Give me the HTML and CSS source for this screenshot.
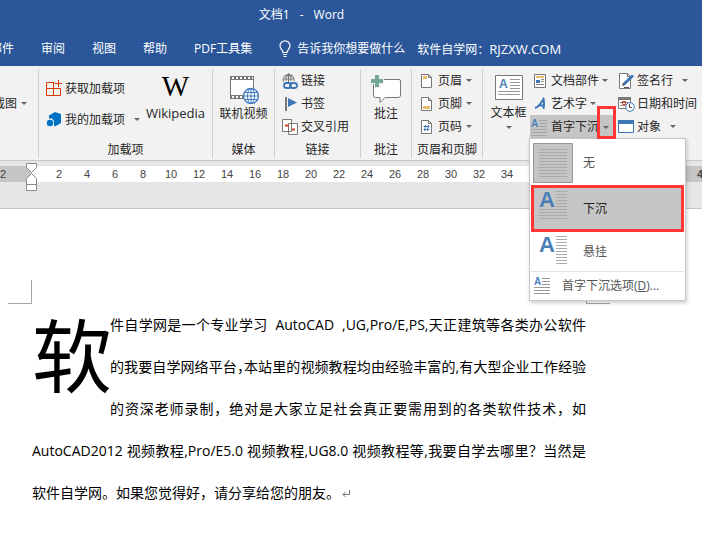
FILE: index.html
```html
<!DOCTYPE html>
<html lang="zh-CN">
<head>
<meta charset="utf-8">
<title>文档1 - Word</title>
<link rel="stylesheet" href="styles.css">
</head>
<body>
<header class="top">
  <div class="title"><span>文档1</span><span>-</span><span>Word</span></div>
  <nav class="tabs">
    <a href="#">邮件</a><a href="#">审阅</a><a href="#">视图</a><a href="#">帮助</a><a href="#">PDF工具集</a>
    <button class="tell" type="button">
      <svg width="12" height="18" viewBox="0 0 12 18" fill="none" stroke="#fff" stroke-width="1.2"><path d="M4 12.5C4 10 1 9 1 5.800A5 5 0 0 1 11 5.800C11 9 8 10 8 12.500ZM4 14.500H8M4.500 16.500H7.500"/></svg>
      <span>告诉我你想要做什么</span>
    </button>
    <span class="site">软件自学网：<span class="domain">RJZXW.COM</span></span>
  </nav>
</header>

<section class="ribbon">
  <div class="group shot">
    <button class="cmd" type="button"><span>屏幕截图</span><i class="caret"></i></button>
  </div>

  <div class="group">
    <div class="body addins">
      <div class="stack two">
        <button class="cmd" type="button">
          <svg width="17" height="17" viewBox="0 0 17 17" fill="none" stroke="#d83b01"><path d="M8.500 2.500H.5V15.500H14.500V8.500M.5 8.500H14.500M7.500 2.500V15.500M12.500 0V7M9 3.500H16"/></svg>
          <span>获取加载项</span>
        </button>
        <button class="cmd" type="button">
          <svg width="17" height="17" viewBox="0 0 17 17" fill="#0072c6"><path d="M3 4.500L9 1L15 3V12L9 15.500L8 14.500V10L6 7.500L3 7.500Z"/><circle cx="4" cy="12" r="3.200"/></svg>
          <span>我的加载项</span><i class="caret far"></i>
        </button>
      </div>
      <button class="big wiki" type="button"><span class="w" aria-hidden="true">W</span><span>Wikipedia</span></button>
    </div>
    <h2>加载项</h2>
  </div>

  <div class="group">
    <button class="body big" type="button">
      <svg width="30" height="30" viewBox="0 0 30 30" fill="none" stroke="#777"><path fill="#fff" d="M1.500 2.500H24.500V24.500H1.500Z"/><path stroke-width="4" d="M1 4H25M1 23H15"/><path stroke="#fff" stroke-width="2" stroke-dasharray="2 2" d="M3 4H24M3 23H14"/><circle cx="22" cy="22" r="7.500" fill="#fff" stroke="#3f7dbd" stroke-width="1.300"/><g stroke="#3f7dbd"><ellipse cx="22" cy="22" rx="3.500" ry="7.500"/><path d="M14.500 22H29.500M22 14.500V29.500M15.500 18.500H28.500M15.500 25.500H28.500"/></g></svg>
      <span>联机视频</span>
    </button>
    <h2>媒体</h2>
  </div>

  <div class="group">
    <div class="body stack links">
      <button class="cmd" type="button">
        <svg width="16" height="16" viewBox="0 0 16 16" fill="none" stroke="#777"><path d="M1.500 9A5.500 5.500 0 1 1 12 8M1 6H12M2.500 3H11M6.500 .5V9M4 8Q3 4 6.500 .5Q10 4 9 8"/><g stroke="#3f76b5" stroke-width="1.800"><rect x="2" y="10" width="7" height="5" rx="2.500"/><rect x="8" y="10" width="7" height="5" rx="2.500"/></g></svg>
        <span>链接</span>
      </button>
      <button class="cmd" type="button">
        <svg width="16" height="16" viewBox="0 0 16 16"><path fill="#777" d="M3 1H5V15H3Z"/><path fill="#3f76b5" d="M6 2L15 6.500L6 11Z"/></svg>
        <span>书签</span>
      </button>
      <button class="cmd" type="button">
        <svg width="16" height="16" viewBox="0 0 16 16" fill="#fff" stroke="#777"><path d="M.5 .5H9.500V12.500H.5ZM6.500 4.500H15.500V15.500H6.500Z"/><path stroke="#d24726" stroke-width="2" d="M3 6.500H7M10 10.500H13"/></svg>
        <span>交叉引用</span>
      </button>
    </div>
    <h2>链接</h2>
  </div>

  <div class="group">
    <button class="body big" type="button">
      <svg width="30" height="30" viewBox="0 0 30 30"><path d="M2.500 5.500H28Q29.500 5.500 29.500 7V21Q29.500 23.500 27.500 23.500H14L9 28.500V23.500H4.500Q2.500 23.500 2.500 21Z" fill="#fff" stroke="#777"/><path stroke="#f2f2f2" stroke-width="6" d="M0 7H13M6.500 1V14"/><path stroke="#72a894" stroke-width="4" d="M0 7H12M6 1V13"/></svg>
      <span>批注</span>
    </button>
    <h2>批注</h2>
  </div>

  <div class="group">
    <div class="body stack pages">
      <button class="cmd" type="button">
        <svg width="11" height="14" viewBox="0 0 11 14"><path d="M.5 .5H7.500L10.500 3.500V13.500H.5ZM7.500 .5V3.500H10.500" fill="#fff" stroke="#777"/><path fill="#e9bd6c" d="M2 2H6V5H2Z"/></svg>
        <span>页眉</span><i class="caret"></i>
      </button>
      <button class="cmd" type="button">
        <svg width="11" height="14" viewBox="0 0 11 14"><path d="M.5 .5H7.500L10.500 3.500V13.500H.5ZM7.500 .5V3.500H10.500" fill="#fff" stroke="#777"/><path fill="#e9bd6c" d="M2 9H9V12H2Z"/></svg>
        <span>页脚</span><i class="caret"></i>
      </button>
      <button class="cmd" type="button">
        <svg width="11" height="14" viewBox="0 0 11 14" fill="none"><path d="M.5 .5H7.500L10.500 3.500V13.500H.5ZM7.500 .5V3.500H10.500" fill="#fff" stroke="#777"/><path stroke="#3f76b5" d="M4.500 5L3.500 11M7.500 5L6.500 11M2.500 6.500H8.500M2.500 9.500H8.500"/></svg>
        <span>页码</span><i class="caret"></i>
      </button>
    </div>
    <h2>页眉和页脚</h2>
  </div>

  <div class="group text">
    <button class="big box" type="button">
      <svg width="28" height="25" viewBox="0 0 28 25"><path d="M.5 .5H27.500V24.500H.5Z" fill="#fff" stroke="#777"/><text class="a" x="4" y="13" font-size="12">A</text><path stroke="#999" d="M15 4.500H25M15 7.500H25M15 10.500H25M15 13.500H25M3 16.500H25M3 19.500H25"/></svg>
      <span>文本框</span><i class="caret"></i>
    </button>
    <div class="stack parts">
      <button class="cmd" type="button">
        <svg width="12" height="14" viewBox="0 0 12 14"><path d="M.5 .5H11.500V13.500H.5Z" fill="#fff" stroke="#777"/><path stroke="#e9bd6c" stroke-width="2" d="M2 3H10"/><path stroke="#3f76b5" stroke-width="3" d="M2 7.500H6"/><path stroke="#888" d="M7 5.500H10M7 7.500H10M2 10.500H10"/></svg>
        <span>文档部件</span><i class="caret"></i>
      </button>
      <button class="cmd" type="button">
        <svg width="12" height="14" viewBox="0 0 12 14"><path fill="none" stroke="#3f76b5" stroke-width="2" d="M1 11Q5 10 9.500 2Q10.500 6 9.500 12M4 8.500H10"/></svg>
        <span>艺术字</span><i class="caret"></i>
      </button>
      <div class="drop">
        <button class="cmd open" type="button" aria-expanded="true">
          <svg width="17" height="17" viewBox="0 0 17 17"><text class="a" x="0" y="8" font-size="10">A</text><path stroke="#a5a5a5" d="M8 1.500H16M8 4.500H16M8 7.500H16M0 10.500H16M0 13.500H16M0 16.500H16"/></svg>
          <span>首字下沉</span><i class="caret"></i>
        </button>
        <span class="mark"></span>
        <div class="menu">
          <button class="item none" type="button">
            <svg width="40" height="40" viewBox="0 0 40 40"><path d="M.5 .5H39.500V39.500H.5Z" fill="#c5c5c5" stroke="#979797"/><path stroke="#aaa" d="M6 6.500H34M6 9.500H34M6 12.500H34M6 15.500H34M6 18.500H34M6 21.500H34M6 24.500H34M6 27.500H34M6 30.500H34M6 33.500H34"/></svg>
            <span>无</span>
          </button>
          <button class="item on" type="button">
            <svg width="40" height="40" viewBox="0 0 40 40"><text class="a" x="6" y="20" font-size="22">A</text><path stroke="#aaa" d="M23 4.500H34M23 7.500H34M23 10.500H34M23 13.500H34M23 16.500H34M23 19.500H34M6 22.500H34M6 25.500H34M6 28.500H34M6 31.500H34"/></svg>
            <span>下沉</span>
          </button>
          <button class="item hang" type="button">
            <svg width="40" height="40" viewBox="0 0 40 40"><text class="a" x="6" y="20" font-size="22">A</text><path stroke="#aaa" d="M23 4.500H34M23 7.500H34M23 10.500H34M23 13.500H34M23 16.500H34M23 19.500H34M23 22.500H34M23 25.500H34M23 28.500H34M23 31.500H34"/></svg>
            <span>悬挂</span>
          </button>
          <button class="item options" type="button">
            <svg width="17" height="17" viewBox="0 0 17 17"><text class="a" x="0" y="8" font-size="10">A</text><path stroke="#999" d="M8 1.500H16M8 4.500H16M8 7.500H16M0 10.500H16M0 13.500H16M0 16.500H16"/></svg>
            <span>首字下沉选项(<u>D</u>)...</span>
          </button>
        </div>
      </div>
    </div>
    <div class="stack objects">
      <button class="cmd" type="button">
        <svg width="17" height="16" viewBox="0 0 17 16"><path d="M1.500 .5H9.500L12.500 3.500V15.500H1.500ZM9.500 .5V3.500H12.500" fill="#fff" stroke="#777"/><path stroke="#3f76b5" stroke-width="3" d="M6 11L15 2.500"/><path fill="#555" d="M4 13L5 9.500L7.500 12ZM6 14H11V15H6Z"/></svg>
        <span>签名行</span><i class="caret far"></i>
      </button>
      <button class="cmd" type="button">
        <svg width="17" height="16" viewBox="0 0 17 16" fill="none"><path d="M.5 1.500H12.500V12.500H.5Z" fill="#fff" stroke="#777"/><path stroke="#777" stroke-width="3" d="M0 2.500H13"/><path stroke="#777" stroke-dasharray="2 1" d="M2 6.500H11M2 9.500H8"/><path stroke="#d24726" d="M4.500 5.500H7.500V8.500H4.500Z"/><circle cx="12" cy="11" r="4.300" fill="#fff" stroke="#3f76b5"/><path stroke="#555" d="M11.500 8V11.500H14"/></svg>
        <span>日期和时间</span>
      </button>
      <button class="cmd" type="button">
        <svg width="17" height="14" viewBox="0 0 17 14"><path d="M.5 .5H15.500V12.500H.5Z" fill="#fff" stroke="#3f76b5"/><path fill="#3f76b5" d="M0 0H16V4H0Z"/></svg>
        <span>对象</span><i class="caret far"></i>
      </button>
    </div>
  </div>
</section>

<div class="rulerbar">
  <div class="ruler">
    <span>2</span><span></span><span>2</span><span>4</span><span>6</span><span>8</span><span>10</span><span>12</span><span>14</span><span>16</span><span>18</span><span>20</span><span>22</span><span>24</span><span>26</span><span>28</span><span>30</span><span>32</span><span>34</span><span></span><span></span><span></span><span></span><span></span><span></span><span class="bold">48</span>
  </div>
  <svg class="indent" width="11" height="28" viewBox="0 0 11 28" fill="#fff" stroke="#8a8a8a"><path d="M.5 .5H10.500V4.500L5.500 9.500L.5 4.500ZM5.500 10.500L10.500 15.500V21.500H.5V15.500ZM.5 21.500H10.500V27.500H.5Z"/></svg>
</div>

<main class="page">
  <div class="corners"><i></i><i></i></div>
  <p class="text-body">
    <span class="cap">软</span>
    <span class="line">件自学网是一个专业学习&nbsp; AutoCAD &nbsp;,UG,Pro/E,PS,天正建筑等各类办公软件</span>
    <span class="line tight">的我要自学网络平台，本站里的视频教程均由经验丰富的,有大型企业工作经验</span>
    <span class="line">的资深老师录制，绝对是大家立足社会真正要需用到的各类软件技术，如</span>
    <span class="line">AutoCAD2012 视频教程,Pro/E5.0 视频教程,UG8.0 视频教程等,我要自学去哪里？当然是</span>
    <span class="line last">软件自学网。如果您觉得好，请分享给您的朋友。<svg width="9" height="8" viewBox="0 0 9 8" fill="none" stroke="#777"><path d="M7.500 0V4.500H1M3.500 2L1 4.500L3.500 7"/></svg></span>
  </p>
</main>
</body>
</html>
```

FILE: styles.css
```css
* { box-sizing: border-box; }
body {
  margin: 0;
  min-height: 100vh;
  overflow-x: hidden;
  background: #fff;
  color: #262626;
  font: 12px/16px "Open Sans", "Noto Sans CJK SC", sans-serif;
}
button {
  margin: 0;
  padding: 0;
  border: 0;
  background: none;
  color: inherit;
  font: inherit;
  white-space: nowrap;
}
svg { flex: none; display: block; }
.a { font-family: "Liberation Sans", sans-serif; font-weight: bold; fill: #4a7fb8; }

.top { background: #2b579a; color: #fff; height: 66px; overflow: hidden; }
.title { display: flex; justify-content: center; gap: 10px; padding: 7px 99px 0 0; }
.tabs {
  display: flex;
  align-items: center;
  gap: 27px;
  height: 20px;
  margin: 16px 0 0 -10px;
  white-space: nowrap;
}
.tabs a { color: #fff; text-decoration: none; }
.tell { display: flex; align-items: center; gap: 6px; }
.site { margin-left: -15px; }
.domain { font-size: 13px; }

.ribbon {
  display: grid;
  grid-template-columns: 39px 174px 62px 86px 51px 71px 1fr;
  height: 95px;
  padding: 3px 0 4px;
  background: #f2f2f2;
  border-bottom: 1px solid #c8c8c8;
}
.group {
  display: flex;
  flex-direction: column;
  min-width: 0;
  border-right: 1px solid #d0d0d0;
}
.group h2 {
  margin: 0;
  padding-top: 4px;
  font-size: 12px;
  font-weight: normal;
  text-align: center;
  white-space: nowrap;
}
.body { height: 69px; }
.cmd { display: flex; align-items: center; gap: 3px; height: 23px; }
.caret {
  flex: none;
  width: 0;
  border: 3px solid transparent;
  border-top-color: #666;
  border-bottom-width: 0;
  margin-left: 1px;
}
.caret.far { margin-left: 7px; }
.stack { display: flex; flex-direction: column; align-items: flex-start; }
.big { display: flex; flex-direction: column; align-items: center; gap: 2px; padding-top: 5px; }

.shot { align-items: flex-end; padding: 23px 11px 0 0; }
.addins { display: flex; justify-content: space-between; padding: 0 7px; }
.two { padding-top: 8px; gap: 8px; }
.two .cmd { gap: 2px; }
.wiki { font-size: 13px; gap: 7px; }
.w { font: 29px/24px "Liberation Serif", serif; color: #000; }
.links { padding-left: 7px; }
.pages { padding-left: 9px; }
.pages .cmd { gap: 6px; }
.pages .caret { margin-left: -2px; }

.text { flex-direction: row; border-right: 0; }
.box { width: 47px; padding: 6px 0 0 4px; gap: 5px; flex: none; }
.box .caret { margin-left: 0; }
.parts { width: 87px; flex: none; }
.parts .cmd { padding-left: 4px; gap: 5px; }
.parts .caret { margin-left: -2px; }
.objects { padding-left: 1px; }
.objects .cmd { gap: 2px; }

.drop { position: relative; width: 86px; }
.parts .open { width: 100%; height: 24px; padding-left: 1px; gap: 3px; background: #c5c5c5; }
.parts .open .caret { margin-left: 1px; }
.mark {
  position: absolute;
  z-index: 3;
  right: 0;
  top: -9px;
  width: 19px;
  height: 33px;
  border: 3px solid #ff3535;
}
.menu {
  position: absolute;
  z-index: 2;
  top: 23px;
  left: -1px;
  width: 157px;
  padding: 1px;
  background: #fff;
  border: 1px solid #c6c6c6;
  box-shadow: 1px 2px 4px #0003;
}
.item { display: flex; align-items: center; gap: 10px; width: 100%; height: 45px; padding-left: 2px; color: #555; }
.item.on {
  height: 47px;
  background: #c5c5c5;
  border: 3px solid #ff3535;
  padding-left: 0;
  color: #222;
}
.item.on svg { margin: 0 0 4px -1px; }
.item.hang { height: 39px; }
.item.options { height: 28px; padding-left: 3px; gap: 11px; border-top: 1px solid #e1e1e1; }

.rulerbar { position: relative; height: 48px; padding-top: 5px; background: #e6e6e6; border-bottom: 1px solid #c6c6c6; }
.ruler {
  display: flex;
  height: 16px;
  overflow: hidden;
  background: linear-gradient(90deg, #c5c5c5 31px, #fff 31px calc(100% - 116px), #c5c5c5 calc(100% - 116px));
  color: #444;
  font: 11px/17px "Liberation Sans", sans-serif;
}
.ruler span { flex: none; width: 28px; text-align: center; }
.ruler span:first-child { margin-left: -11px; }
.bold { font-weight: bold; }
.indent { position: absolute; left: 26px; top: 2px; }

.page { color: #000; }
.corners { display: flex; justify-content: space-between; padding: 71px 92px 0 8px; }
.corners i { width: 24px; height: 24px; border: solid #a6a6a6; border-width: 0 1px 1px 0; }
.corners i + i { border-width: 0 0 1px 1px; }
.text-body { margin: 0; padding: 0 116px 24px 32px; font-size: 14px; line-height: 42px; }
.cap { float: left; width: 78px; font-size: 80px; line-height: 102px; }
.line { display: block; text-align: justify; text-align-last: justify; }
.tight { font-feature-settings: "halt"; }
.last { text-align-last: start; }
.last svg { display: inline-block; margin-left: 2px; }
```
